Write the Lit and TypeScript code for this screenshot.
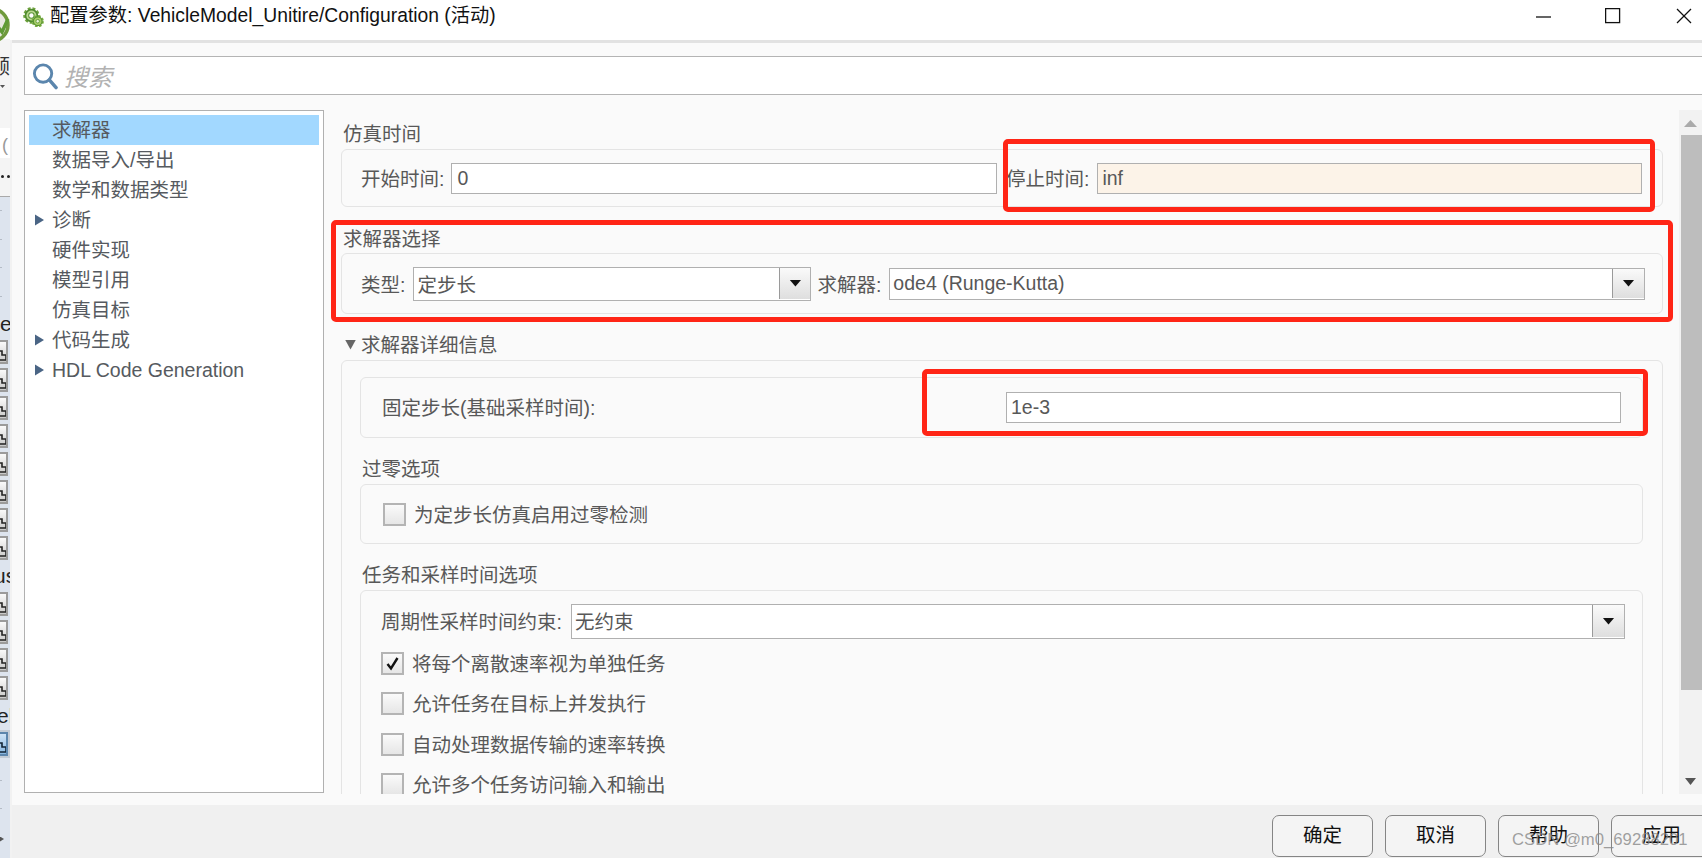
import { LitElement, html, css, svg } from "lit";
import { customElement } from "lit/decorators.js";

const tri = (cls: string) => html`<svg class=${cls} viewBox="0 0 10 12"><path d="M0 0L10 6L0 12Z"/></svg>`;

const gears = svg`
  <circle cx="8" cy="9" r="6.2" fill="none" stroke="#6fa33e" stroke-width="3.2" stroke-dasharray="2.6 1.6"/>
  <circle cx="8" cy="9" r="5.6" fill="#b9d88f" stroke="#4f8a2f" stroke-width="1.6"/>
  <circle cx="8" cy="9" r="2.6" fill="#fff" stroke="#5a9435" stroke-width="1"/>
  <circle cx="14" cy="14.5" r="4.6" fill="none" stroke="#7aae3f" stroke-width="2.6" stroke-dasharray="2.2 1.4"/>
  <circle cx="14" cy="14.5" r="4.2" fill="#a9cf68" stroke="#5a9435" stroke-width="1.2"/>
  <circle cx="14" cy="14.5" r="1.7" fill="#e9f4d8" stroke="#5a9435" stroke-width=".8"/>`;

@customElement("tb-btn")
class TbBtn extends LitElement {
  static properties = { on: { type: Boolean, reflect: true } };
  on = false;
  static styles = css`
    :host { display: flex; height: 28px; align-items: center; overflow: hidden; width: 10px; flex: none; }
    :host([on]) { background: #c3ccd6; }
    .b { flex: none; width: 24px; height: 24px; margin-left: -16px; box-sizing: border-box;
      border: 2px solid #9b9b9b; background: linear-gradient(#fafafa, #c9c9c9); }
    :host([on]) .b { border-color: #5c86ad; background: linear-gradient(#cfe4f7, #86b6e0); }
    svg { display: block; width: 20px; height: 20px; }
    path { fill: none; stroke: #222; stroke-width: 1.6; }
    :host([on]) path { stroke: #123; }
  `;
  render() {
    return html`<div class="b"><svg viewBox="0 0 20 20"><path d="M13 18V9H16V13H20V18H13"/></svg></div>`;
  }
}

@customElement("app-root")
export class AppRoot extends LitElement {
  static styles = css`
    :host { display: block; width: 1702px; height: 858px; position: relative; overflow: hidden; background: #fff;
      font: 19.5px "Liberation Sans", "Noto Sans CJK SC", sans-serif; color: #585858; }
    * { box-sizing: border-box; }
    .root { display: flex; height: 858px; }

    .strip { width: 10px; flex: none; display: flex; flex-direction: column; overflow: hidden; background: #dde4ee; color: #111; }
    .s-top { height: 39px; background: #fff; flex: none; position: relative; }
    .s-top svg { width: 36px; height: 36px; margin: 7px 0 0 -26px; display: block; }
    .s-a { height: 89px; background: #f5f5f5; flex: none; padding-top: 16px; overflow: hidden; }
    .s-a .t { display: block; margin-left: -30px; font-size: 20px; line-height: 24px; color: #333; white-space: nowrap; }
    .s-a .ar { width: 5px; height: 3px; margin-top: 6px; background: #555; clip-path: polygon(0 0, 100% 0, 50% 100%); }
    .s-b { height: 30px; background: #fff; flex: none; color: #999; padding-left: 2px; line-height: 34px; font-size: 18px; }
    .s-c { height: 39px; background: #f4f4f4; flex: none; border-bottom: 1px solid #a9a9a9; display: flex; gap: 3px; padding: 17px 0 0 1px; }
    .s-c i { width: 3px; height: 3px; background: #222; border-radius: 50%; }
    .s-blue { display: flex; flex-direction: column; padding-top: 13px; }
    .s-dot { height: 28.5px; flex: none; }
    .s-dot.short { height: 14px; }
    .s-dot::before { content: ""; display: block; width: 2px; height: 1px; background: #b5bcc6; }
    .s-txt { height: 28px; flex: none; line-height: 28px; font-size: 21px; white-space: nowrap; color: #222; }
    .s-txt.us { margin-left: -6px; }
    .s-txt.eh { margin-left: -3px; }
    .s-gap { height: 22px; flex: none; }
    .s-ar { width: 4px; height: 5px; background: #555; clip-path: polygon(0 0, 100% 50%, 0 100%); }

    .win { flex: 1; min-width: 0; display: flex; flex-direction: column; margin-left: 0; background: #fff; }
    .title { height: 40px; flex: none; display: flex; align-items: center; padding: 0 0 8px 13px; background: #fff; color: #111; }
    .title .ico { width: 21px; height: 21px; flex: none; }
    .title .tx { margin-left: 6px; font-size: 19.3px; line-height: 26px; white-space: nowrap; }
    .ctl { margin-left: auto; display: flex; align-items: center; height: 32px; flex: none; }
    .ctl svg { display: block; width: 16px; height: 16px; flex: none; }
    .ctl svg * { fill: none; stroke: #111; stroke-width: 1.3; }
    .ctl .m { margin-right: 53px; }
    .ctl .x { margin-right: 55px; }
    .ctl .cl { margin-right: 10px; }

    .inner { flex: 1; min-height: 0; margin-left: 2px; display: flex; flex-direction: column; background: #fafafa; border-top: 3px solid #e2e2e2; box-shadow: -2px 0 0 #f2f2f2; }
    .search { flex: none; height: 39px; margin: 13px 0 15px 12px; background: #fff; border: 1px solid #b4b4b4; border-right: 0; display: flex; align-items: center; padding-left: 7px; }
    .search svg { width: 26px; height: 28px; flex: none; }
    .search span { margin-left: 6px; font-size: 24px; font-style: italic; color: #b2b2b2; }

    .main { flex: none; height: 684px; display: flex; padding-left: 12px; overflow: hidden; }
    .tree { width: 300px; flex: none; height: 683px; background: #fff; border: 1px solid #b0b0b0; padding: 4px; display: flex; flex-direction: column; }
    .node { height: 30px; flex: none; display: flex; align-items: center; padding: 0 0 3px 23px; position: relative; white-space: nowrap; color: #565a60; }
    .node.lat { padding-bottom: 0; }
    .node.sel { background: #a2d8ff; }
    .node .exp { position: absolute; left: 6px; top: 9px; width: 9px; height: 12px; fill: #4a6585; }

    .pane { flex: 1; min-width: 0; padding: 8px 16px 0 17px; overflow: hidden; }
    .sec { margin-bottom: 15px; }
    .head { height: 31px; display: flex; align-items: center; white-space: nowrap; padding: 0 0 2px 2px; }
    .head.nosh { padding-bottom: 0; }
    .head .det { width: 11px; height: 10px; margin: 2px 5px 0 2px; flex: none; background: #666; clip-path: polygon(0 0, 100% 0, 50% 100%); }
    .box { border: 1px solid #e4e4e4; border-radius: 6px; background: #fafafa; }
    .time { height: 58px; display: flex; align-items: center; padding: 0 20px 0 19px; }
    .lab { flex: none; white-space: nowrap; padding-bottom: 2px; }
    .field { height: 31px; background: #fff; border: 1px solid #b0b0b0; padding-left: 5px; display: flex; align-items: center; white-space: nowrap; }
    .time .field { flex: 1; min-width: 0; margin-left: 7px; }
    .time .lab2 { margin-left: 9px; }
    .time .warn { margin-left: 8px; padding-left: 4px; }
    .field.warn { background: #fcf3e8; }

    .solver { height: 61px; display: flex; align-items: center; padding: 0 17px 0 19px; }
    .solver .lab { padding-bottom: 0; }
    .sel-f { display: flex; height: 32px; background: #fff; border: 1px solid #b0b0b0; }
    .sel-f .v { flex: 1; min-width: 0; padding-left: 4px; display: flex; align-items: center; white-space: nowrap; }
    .sel-f .dd { width: 32px; flex: none; border-left: 1px solid #9a9a9a; margin-bottom: 1px; background: linear-gradient(#fafafa, #dedede); display: flex; align-items: center; justify-content: center; }
    .sel-f .dd i { width: 12px; height: 7px; background: #111; clip-path: polygon(0 0, 100% 0, 50% 100%); }
    .type { width: 398px; height: 34px; margin-left: 8px; flex: none; }
    .type .v { padding-left: 3px; }
    .type .dd { width: 31px; }
    .lab3 { margin-left: 6px; }
    .slv { flex: 1; min-width: 0; margin-left: 8px; }
    .slv .v { padding-left: 3px; }

    .outer { padding: 16px 19px 0 18px; height: 500px; }
    .fixed { height: 61px; display: flex; align-items: center; justify-content: space-between; padding: 0 21px; }
    .fixed .field { width: 615px; padding-left: 4px; }
    .o-sec { margin-bottom: 15px; }
    .zero { height: 60px; display: flex; align-items: center; padding-left: 22px; }
    .tasks { padding: 13px 17px 0 20px; height: 300px; }
    .per { display: flex; align-items: center; }
    .per .sel-f { flex: 1; min-width: 0; height: 35px; margin-left: 9px; }
    .per .v { padding-bottom: 2px; padding-left: 3px; }
    .cks { margin-top: 13px; display: flex; flex-direction: column; gap: 18.6px; }
    .ck { display: flex; align-items: center; height: 22px; gap: 8px; white-space: nowrap; }
    .ck span { padding-bottom: 2px; }
    .ck .cb { width: 23px; height: 23px; flex: none; border: 2px solid #b4b4b4; background: linear-gradient(#fafafa, #e6e6e6); display: flex; align-items: center; justify-content: center; }
    .ck .cb svg { width: 15px; height: 15px; fill: none; stroke: #111; stroke-width: 2.4; }

    .sb { width: 23px; flex: none; height: 684px; background: #f2f2f2; position: relative; display: flex; flex-direction: column; align-items: flex-end; }
    .sb .up, .sb .dn { width: 100%; display: flex; justify-content: center; flex: none; }
    .sb .up { height: 25px; padding-top: 10px; }
    .sb .up i { width: 13px; height: 7px; background: #aaa; clip-path: polygon(50% 0, 100% 100%, 0 100%); }
    .sb .th { width: 21px; height: 555px; background: #bdbdbd; flex: none; }
    .sb .dn { margin-top: auto; height: 18px; padding-top: 2px; }
    .sb .dn i { width: 11px; height: 7px; background: #555; clip-path: polygon(0 0, 100% 0, 50% 100%); }

    .foot { flex: 1; background: #f0f0f0; margin-top: 11px; display: flex; padding: 10px 0 0 1260px; gap: 12px; overflow: hidden; }
    .btn { flex: none; width: 101px; height: 42px; border: 1px solid #858585; border-radius: 7px; background: #f4f4f4; color: #111; display: flex; align-items: center; justify-content: center; padding-bottom: 5px; }

    .red { position: absolute; border: 5px solid #ff2516; border-radius: 5px; pointer-events: none; }
    .r1 { left: 1003px; top: 139px; width: 652px; height: 73px; }
    .r2 { left: 331px; top: 220px; width: 1342px; height: 102px; }
    .r3 { left: 922px; top: 369px; width: 726px; height: 67px; }
    .wm { position: absolute; left: 1512px; top: 830px; font: 16.7px "Liberation Sans", sans-serif; color: rgba(135,135,135,.78); white-space: nowrap; }
  `;

  renderStrip() {
    return html`<div class="strip">
      <div class="s-top"><svg viewBox="0 0 36 36"><circle cx="18" cy="18" r="16" fill="#e8e8e0" stroke="#6f9a3c" stroke-width="3.5"/><path d="M24 20L28 25L34 12" fill="none" stroke="#5f9a35" stroke-width="3.4"/></svg></div>
      <div class="s-a"><span class="t">回顾</span><div class="ar"></div></div>
      <div class="s-b">(</div>
      <div class="s-c"><i></i><i></i></div>
      <div class="s-blue">
        ${[0, 1, 2].map(() => html`<div class="s-dot"></div>`)}
        <div class="s-dot short"></div>
        <div class="s-txt">e</div>
        ${[0, 1, 2, 3, 4, 5, 6, 7].map(() => html`<tb-btn></tb-btn>`)}
        <div class="s-txt us">us</div>
        ${[0, 1, 2, 3].map(() => html`<tb-btn></tb-btn>`)}
        <div class="s-txt eh">eh</div>
        <tb-btn on></tb-btn>
        <div class="s-gap"></div>
        <div class="s-dot"></div>
        <div class="s-dot"></div>
        <div class="s-ar"></div>
      </div>
    </div>`;
  }

  node(label: string, sel = false, exp = false, lat = false) {
    return html`<div class="node ${sel ? "sel" : ""} ${lat ? "lat" : ""}">${exp ? tri("exp") : ""}${label}</div>`;
  }

  select(cls: string, v: string) {
    return html`<div class="sel-f ${cls}"><div class="v">${v}</div><div class="dd"><i></i></div></div>`;
  }

  check(label: string, on = false) {
    return html`<div class="ck"><div class="cb">${on ? html`<svg viewBox="0 0 15 15"><path d="M2.5 8L6 12.5L12.5 2"/></svg>` : ""}</div><span>${label}</span></div>`;
  }

  render() {
    return html`<div class="root">
      ${this.renderStrip()}
      <div class="win">
        <div class="title">
          <svg class="ico" viewBox="0 0 20 20">${gears}</svg>
          <span class="tx">配置参数: VehicleModel_Unitire/Configuration (活动)</span>
          <div class="ctl">
            <svg class="m" viewBox="0 0 16 16"><path d="M0 9H15"/></svg>
            <svg class="x" viewBox="0 0 16 16"><rect x=".6" y=".6" width="14" height="14"/></svg>
            <svg class="cl" viewBox="0 0 16 16"><line x1="1" y1="1" x2="15" y2="15"/><line x1="15" y1="1" x2="1" y2="15"/></svg>
          </div>
        </div>
        <div class="inner">
          <div class="search">
            <svg viewBox="0 0 27 28"><circle cx="11.5" cy="11.5" r="9" fill="#fff" stroke="#5b86ad" stroke-width="3"/><path d="M18 18L25 26" stroke="#5b86ad" stroke-width="3.6" stroke-linecap="round"/></svg>
            <span>搜索</span>
          </div>
          <div class="main">
            <div class="tree">
              ${this.node("求解器", true)}
              ${this.node("数据导入/导出")}
              ${this.node("数学和数据类型")}
              ${this.node("诊断", false, true)}
              ${this.node("硬件实现")}
              ${this.node("模型引用")}
              ${this.node("仿真目标")}
              ${this.node("代码生成", false, true)}
              ${this.node("HDL Code Generation", false, true, true)}
            </div>
            <div class="pane">
              <div class="sec">
                <div class="head">仿真时间</div>
                <div class="box time">
                  <span class="lab">开始时间:</span><div class="field">0</div>
                  <span class="lab lab2">停止时间:</span><div class="field warn">inf</div>
                </div>
              </div>
              <div class="sec">
                <div class="head nosh">求解器选择</div>
                <div class="box solver">
                  <span class="lab">类型:</span>${this.select("type", "定步长")}
                  <span class="lab lab3">求解器:</span>${this.select("slv", "ode4 (Runge-Kutta)")}
                </div>
              </div>
              <div class="sec">
                <div class="head"><i class="det"></i>求解器详细信息</div>
                <div class="box outer">
                  <div class="box fixed o-sec"><span class="lab">固定步长(基础采样时间):</span><div class="field">1e-3</div></div>
                  <div class="o-sec">
                    <div class="head">过零选项</div>
                    <div class="box zero">${this.check("为定步长仿真启用过零检测")}</div>
                  </div>
                  <div>
                    <div class="head">任务和采样时间选项</div>
                    <div class="box tasks">
                      <div class="per"><span class="lab">周期性采样时间约束:</span>${this.select("", "无约束")}</div>
                      <div class="cks">
                        ${this.check("将每个离散速率视为单独任务", true)}
                        ${this.check("允许任务在目标上并发执行")}
                        ${this.check("自动处理数据传输的速率转换")}
                        ${this.check("允许多个任务访问输入和输出")}
                      </div>
                    </div>
                  </div>
                </div>
              </div>
            </div>
            <div class="sb">
              <div class="up"><i></i></div>
              <div class="th"></div>
              <div class="dn"><i></i></div>
            </div>
          </div>
          <div class="foot">
            <div class="btn">确定</div><div class="btn">取消</div><div class="btn">帮助</div><div class="btn">应用</div>
          </div>
        </div>
      </div>
      </div>
      <div class="red r1"></div>
      <div class="red r2"></div>
      <div class="red r3"></div>
      <div class="wm">CSDN @m0_69288201</div>`;
  }
}
void TbBtn;
